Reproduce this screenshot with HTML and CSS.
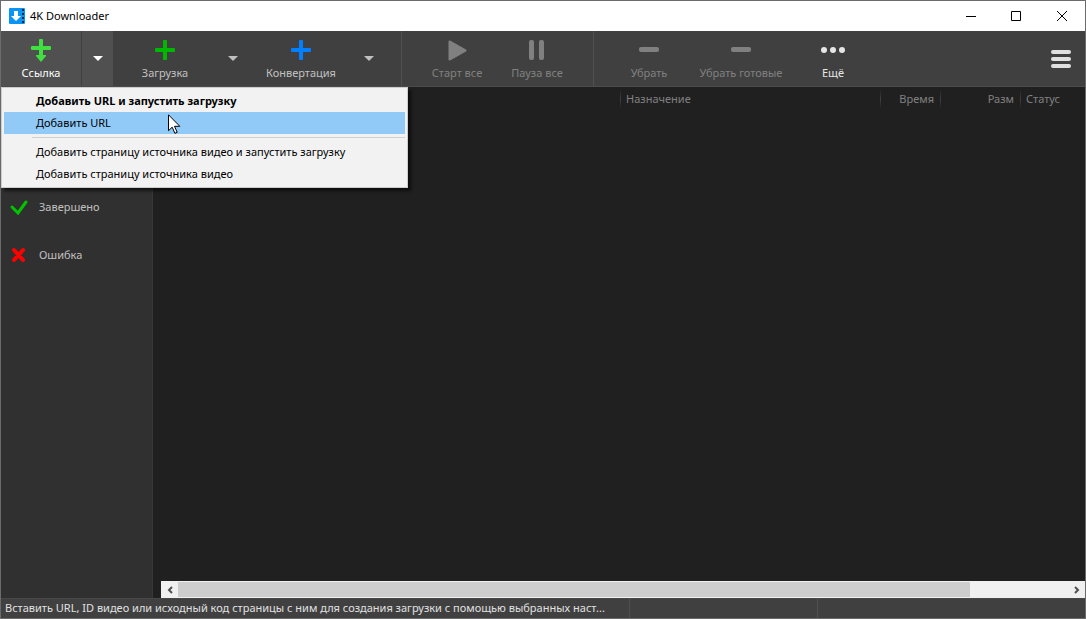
FILE: index.html
```html
<!DOCTYPE html>
<html lang="ru">
<head>
    <meta charset="UTF-8">
    <meta name="viewport" content="width=device-width, initial-scale=1.0">
    <title>4K Downloader</title>
    <link rel="stylesheet" href="styles.css">
</head>
<body>
    <div class="window">
        <header class="titlebar">
            <svg class="app-icon" width="16" height="16" viewBox="0 0 16 16">
                <rect width="16" height="16" rx="1" fill="#0a95f5"/>
                <path d="M5 3h4v5h3l-5 5-5-5h3z" fill="#fff"/>
                <path d="M13 1h2v2h-2zM13 5h2v2h-2zM13 9h2v2h-2zM13 13h2v2h-2z" fill="#0b2a45"/>
            </svg>
            <h1 class="app-title">4K Downloader</h1>
            <div class="window-controls">
                <button type="button" class="window-btn" aria-label="Свернуть">
                    <svg width="11" height="11" viewBox="0 0 11 11"><path d="M1 5.5h10" stroke="#000"/></svg>
                </button>
                <button type="button" class="window-btn" aria-label="Развернуть">
                    <svg width="11" height="11" viewBox="0 0 11 11"><path d="M.5.5h9v9h-9z" fill="none" stroke="#000"/></svg>
                </button>
                <button type="button" class="window-btn" aria-label="Закрыть">
                    <svg width="11" height="11" viewBox="0 0 11 11"><path d="M0 0l10 10M10 0L0 10" stroke="#000"/></svg>
                </button>
            </div>
        </header>

        <div class="toolbar">
            <div class="tool-group">
                <div class="split active">
                    <button type="button" class="tool-btn">
                        <svg width="24" height="24" viewBox="0 0 24 24" fill="#40e040">
                            <rect x="10" y="1" width="4" height="18" rx="1"/>
                            <rect x="2" y="8" width="20" height="4" rx="1"/>
                            <path d="M7 17h10v1l-5 6-5-6z"/>
                        </svg>
                        <span>Ссылка</span>
                    </button>
                    <button type="button" class="arrow-btn" aria-label="Меню ссылки" aria-expanded="true">
                        <svg width="10" height="5" viewBox="0 0 10 5"><path d="M0 0h10L5 5z" fill="currentColor"/></svg>
                    </button>
                    <!-- Dropdown for the link button -->
                    <div class="menu" role="menu">
                        <button type="button" class="menu-item default" role="menuitem">Добавить URL и запустить загрузку</button>
                        <button type="button" class="menu-item selected" role="menuitem">Добавить URL</button>
                        <div class="menu-separator"></div>
                        <button type="button" class="menu-item" role="menuitem">Добавить страницу источника видео и запустить загрузку</button>
                        <button type="button" class="menu-item" role="menuitem">Добавить страницу источника видео</button>
                        <svg class="cursor" width="13" height="20" viewBox="0 0 13 20">
                            <path d="M.5.8v15.9l3.7-3.5 2.7 6.1 2.3-1-2.7-6h5.3z" fill="#fff" stroke="#000"/>
                        </svg>
                    </div>
                </div>
                <div class="split">
                    <button type="button" class="tool-btn wide">
                        <svg width="24" height="24" viewBox="0 0 24 24" fill="#00b800">
                            <rect x="10" y="2" width="4" height="20" rx="1"/>
                            <rect x="2" y="10" width="20" height="4" rx="1"/>
                        </svg>
                        <span>Загрузка</span>
                    </button>
                    <button type="button" class="arrow-btn" aria-label="Меню загрузки">
                        <svg width="10" height="5" viewBox="0 0 10 5"><path d="M0 0h10L5 5z" fill="currentColor"/></svg>
                    </button>
                </div>
                <div class="split">
                    <button type="button" class="tool-btn wide">
                        <svg width="24" height="24" viewBox="0 0 24 24" fill="#0080ff">
                            <rect x="10" y="2" width="4" height="20" rx="1"/>
                            <rect x="2" y="10" width="20" height="4" rx="1"/>
                        </svg>
                        <span>Конвертация</span>
                    </button>
                    <button type="button" class="arrow-btn" aria-label="Меню конвертации">
                        <svg width="10" height="5" viewBox="0 0 10 5"><path d="M0 0h10L5 5z" fill="currentColor"/></svg>
                    </button>
                </div>
            </div>
            <div class="tool-group">
                <button type="button" class="tool-btn" disabled>
                    <svg width="24" height="24" viewBox="0 0 24 24"><path d="M4 3h1l16 9v1L5 22H4z" fill="#808080" stroke="#808080" stroke-linejoin="round"/></svg>
                    <span>Старт все</span>
                </button>
                <button type="button" class="tool-btn" disabled>
                    <svg width="24" height="24" viewBox="0 0 24 24" fill="#808080">
                        <rect x="4" y="2" width="5" height="20" rx="2"/>
                        <rect x="14" y="2" width="5" height="20" rx="2"/>
                    </svg>
                    <span>Пауза все</span>
                </button>
            </div>
            <div class="tool-group">
                <button type="button" class="tool-btn" disabled>
                    <svg width="24" height="24" viewBox="0 0 24 24"><rect x="2" y="9" width="20" height="5" rx="2" fill="#808080"/></svg>
                    <span>Убрать</span>
                </button>
                <button type="button" class="tool-btn wide" disabled>
                    <svg width="24" height="24" viewBox="0 0 24 24"><rect x="2" y="9" width="20" height="5" rx="2" fill="#808080"/></svg>
                    <span>Убрать готовые</span>
                </button>
                <button type="button" class="tool-btn bright">
                    <svg width="24" height="24" viewBox="0 0 24 24" fill="#e6e6e6">
                        <circle cx="3" cy="12" r="3"/>
                        <circle cx="12" cy="12" r="3"/>
                        <circle cx="21" cy="12" r="3"/>
                    </svg>
                    <span>Ещё</span>
                </button>
            </div>
            <button type="button" class="hamburger" aria-label="Меню">
                <svg width="20" height="18" viewBox="0 0 20 18" fill="#e0e0e0">
                    <rect width="20" height="4" rx="2"/>
                    <rect y="7" width="20" height="4" rx="2"/>
                    <rect y="14" width="20" height="4" rx="2"/>
                </svg>
            </button>
        </div>

        <div class="content">
            <nav class="sidebar">
                <a href="#done" class="side-item">
                    <svg width="20" height="20" viewBox="0 0 20 20"><path d="M3 10l6 6 8-11" fill="none" stroke="#00c400" stroke-width="3" stroke-linecap="round"/></svg>
                    Завершено
                </a>
                <a href="#error" class="side-item">
                    <svg width="20" height="20" viewBox="0 0 20 20"><path d="M5 5l9 10M14 5L5 15" stroke="#f00" stroke-width="4" stroke-linecap="round"/></svg>
                    Ошибка
                </a>
            </nav>
            <main class="downloads">
                <table class="list">
                    <thead>
                        <tr>
                            <th></th>
                            <th class="col-dest">Назначение</th>
                            <th class="col-time">Время</th>
                            <th class="col-size">Разм</th>
                            <th class="col-status">Статус</th>
                        </tr>
                    </thead>
                </table>
                <div class="scrollbar">
                    <button type="button" class="scroll-btn" aria-label="Влево">
                        <svg width="8" height="8" viewBox="0 0 8 8"><path d="M6 1L3 4l3 3" fill="none" stroke="#505050" stroke-width="2"/></svg>
                    </button>
                    <div class="scroll-track"><div class="scroll-thumb"></div></div>
                    <button type="button" class="scroll-btn" aria-label="Вправо">
                        <svg width="8" height="8" viewBox="0 0 8 8"><path d="M2 1l3 3-3 3" fill="none" stroke="#505050" stroke-width="2"/></svg>
                    </button>
                </div>
            </main>
        </div>

        <footer class="statusbar">
            <div class="status-text">Вставить URL, ID видео или исходный код страницы с ним для создания загрузки с помощью выбранных наст...</div>
            <div class="status-speed"></div>
            <div class="status-info"></div>
        </footer>
    </div>
</body>
</html>
```
FILE: styles.css
```css
* {
    margin: 0;
    padding: 0;
    box-sizing: border-box;
}

body {
    font-family: "Noto Sans", "Open Sans", sans-serif;
    font-size: 11px;
    line-height: 16px;
    background-color: #202020;
}

button {
    font: inherit;
    color: inherit;
    background: none;
    border: none;
}

svg {
    display: block;
    flex-shrink: 0;
}

.window {
    display: flex;
    flex-direction: column;
    height: 100vh;
    border: 1px solid #6b6b6b;
}

/* Title bar */
.titlebar {
    display: flex;
    align-items: center;
    height: 30px;
    padding-left: 8px;
    background-color: #fff;
}

.app-title {
    margin-left: 5px;
    font-size: 11px;
    font-weight: normal;
    color: #000;
}

.window-controls {
    display: flex;
    margin-left: auto;
    height: 100%;
}

.window-btn {
    display: flex;
    align-items: center;
    justify-content: center;
    width: 46px;
}

/* Toolbar */
.toolbar {
    display: flex;
    height: 56px;
    background-color: #404040;
    border-bottom: 1px solid #4c4c4c;
    color: #c0c0c0;
}

.tool-group {
    display: flex;
    padding: 0 16px 0 15px;
    border-right: 1px solid #505050;
}

.tool-group:first-child {
    padding-left: 0;
}

.tool-group:nth-child(3) {
    border-right: none;
}

.split {
    display: flex;
    position: relative;
}

.split.active {
    background-color: #505050;
    color: #fff;
}

.split.active .arrow-btn {
    border-left: 1px solid #404040;
}

.tool-btn {
    display: flex;
    flex-direction: column;
    align-items: center;
    gap: 3px;
    width: 80px;
    padding-top: 7px;
    white-space: nowrap;
}

.tool-btn.wide {
    width: 104px;
}

.tool-btn.bright {
    color: #e6e6e6;
}

.tool-btn:disabled {
    color: #808080;
}

.arrow-btn {
    display: flex;
    align-items: center;
    justify-content: center;
    width: 32px;
}

.hamburger {
    margin-left: auto;
    padding: 0 14px;
}

/* Dropdown menu */
.menu {
    position: absolute;
    top: 56px;
    left: 0;
    z-index: 10;
    width: 407px;
    padding: 2px;
    background-color: #f2f2f2;
    border: 1px solid #ccc;
    box-shadow: 3px 3px 3px rgba(0, 0, 0, 0.6);
    color: #000;
}

.menu-item {
    display: block;
    width: 100%;
    height: 22px;
    padding-left: 32px;
    text-align: left;
    white-space: nowrap;
}

.menu-item.default {
    font-weight: bold;
}

.menu-item.selected {
    background-color: #91c9f7;
}

.menu-separator {
    height: 1px;
    margin: 3px 0 3px 28px;
    background-color: #d0d0d0;
}

.cursor {
    position: absolute;
    top: 26px;
    left: 166px;
}

/* Content */
.content {
    display: flex;
    flex: 1;
    min-height: 0;
}

.sidebar {
    width: 152px;
    padding-top: 96px;
    background-color: #303030;
    border-right: 1px solid #383838;
}

.side-item {
    display: flex;
    align-items: center;
    gap: 10px;
    height: 48px;
    padding-left: 8px;
    color: #c0c0c0;
    text-decoration: none;
}

.downloads {
    display: flex;
    flex: 1;
    flex-direction: column;
    justify-content: space-between;
    min-width: 0;
    padding-left: 8px;
}

.list {
    width: 100%;
    table-layout: fixed;
    border-collapse: collapse;
}

.list th {
    height: 24px;
    padding: 0 6px;
    font-weight: normal;
    text-align: left;
    color: #808080;
    background: linear-gradient(#202020, #404040, #202020) left / 1px 20px no-repeat;
}

.list th:first-child {
    background: none;
}

.list .col-dest {
    width: 260px;
}

.list .col-time {
    width: 60px;
    text-align: right;
}

.list .col-size {
    width: 80px;
    text-align: right;
}

.list .col-status {
    width: 65px;
}

.scrollbar {
    display: flex;
    height: 17px;
    background-color: #f0f0f0;
}

.scroll-btn {
    display: flex;
    align-items: center;
    justify-content: center;
    width: 17px;
}

.scroll-track {
    flex: 1;
    padding: 1px 0;
}

.scroll-thumb {
    width: 89%;
    height: 100%;
    background-color: #cdcdcd;
}

/* Status bar */
.statusbar {
    display: flex;
    height: 20px;
    line-height: 18px;
    background-color: #404040;
    border-top: 1px solid #484848;
    color: #e0e0e0;
}

.status-text {
    flex: 1;
    min-width: 0;
    padding-left: 4px;
    overflow: hidden;
    white-space: nowrap;
}

.status-speed {
    width: 188px;
    border-left: 1px solid #505050;
}

.status-info {
    width: 268px;
    border-left: 1px solid #505050;
}
```
